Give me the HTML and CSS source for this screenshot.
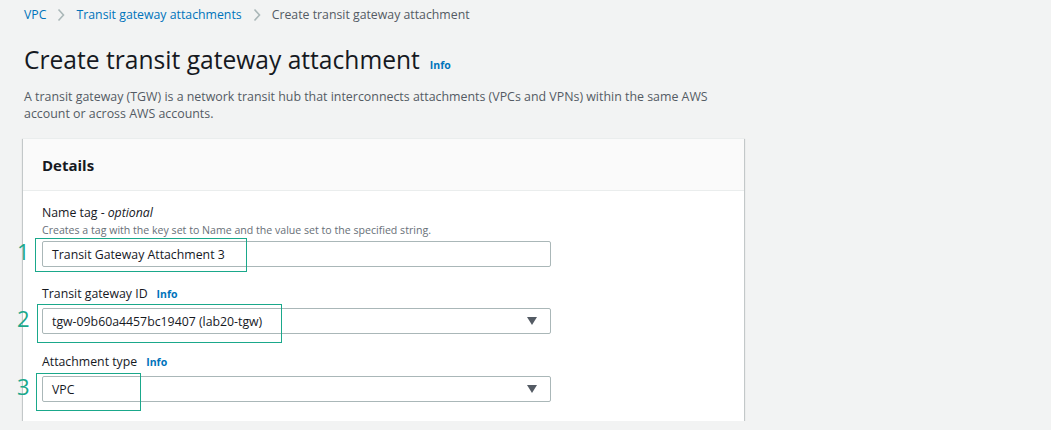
FILE: index.html
```html
<!DOCTYPE html>
<html lang="en">
<head>
<meta charset="utf-8">
<title>Create transit gateway attachment</title>
<link rel="stylesheet" href="styles.css">
</head>
<body>
<main class="page">
  <nav class="breadcrumb">
    <a class="crumb-link" href="#">VPC</a>
    <svg class="crumb-sep" viewBox="0 0 8 14" width="8" height="14"><path d="M1.5 1.5 L6.5 7 L1.5 12.5" fill="none" stroke="#aab7b8" stroke-width="1.6"/></svg>
    <a class="crumb-link" href="#">Transit gateway attachments</a>
    <svg class="crumb-sep" viewBox="0 0 8 14" width="8" height="14"><path d="M1.5 1.5 L6.5 7 L1.5 12.5" fill="none" stroke="#aab7b8" stroke-width="1.6"/></svg>
    <span class="crumb-current">Create transit gateway attachment</span>
  </nav>

  <header class="page-header">
    <h1 class="title">Create transit gateway attachment</h1>
    <a class="info" href="#">Info</a>
  </header>
  <p class="desc">A transit gateway (TGW) is a network transit hub that interconnects attachments (VPCs and VPNs) within the same AWS account or across AWS accounts.</p>

  <section class="card">
    <div class="card-header">
      <h2 class="card-title">Details</h2>
    </div>
    <div class="card-body">
      <div class="field">
        <div class="label">Name tag - <i>optional</i></div>
        <div class="hint">Creates a tag with the key set to Name and the value set to the specified string.</div>
        <div class="control">
          <div class="input">Transit Gateway Attachment 3</div>
          <span class="step-num">1</span>
          <span class="step-box box-1"></span>
        </div>
      </div>

      <div class="field">
        <div class="label">Transit gateway ID <a class="info" href="#">Info</a></div>
        <div class="control">
          <div class="input select">tgw-09b60a4457bc19407 (lab20-tgw)<svg class="caret" viewBox="0 0 10 8" width="10" height="8"><path d="M0 0 H10 L5 8 Z" fill="#545b64"/></svg></div>
          <span class="step-num">2</span>
          <span class="step-box box-2"></span>
        </div>
      </div>

      <div class="field field-last">
        <div class="label">Attachment type <a class="info" href="#">Info</a></div>
        <div class="control">
          <div class="input select">VPC<svg class="caret" viewBox="0 0 10 8" width="10" height="8"><path d="M0 0 H10 L5 8 Z" fill="#545b64"/></svg></div>
          <span class="step-num">3</span>
          <span class="step-box box-3"></span>
        </div>
      </div>
    </div>
  </section>
</main>
</body>
</html>
```

FILE: styles.css
```css
* { box-sizing: border-box; }

html, body {
  margin: 0;
  padding: 0;
  background: #f2f3f3;
}

body {
  font-family: "Open Sans", "Noto Sans", "Liberation Sans", sans-serif;
  color: #16191f;
  font-size: 12.3px;
}

a { text-decoration: none; }

.page {
  padding: 5px 0 0 24px;
}

.breadcrumb {
  display: flex;
  align-items: center;
  gap: 11px;
  height: 20px;
  line-height: 20px;
  font-size: 12.3px;
}

.crumb-link { color: #0073bb; }
.crumb-current { color: #545b64; }
.crumb-sep { display: block; }

.page-header {
  display: flex;
  align-items: baseline;
  gap: 10px;
  margin-top: 19px;
}

.title {
  margin: 0;
  font-size: 24.6px;
  font-weight: 400;
  line-height: 32px;
  color: #16191f;
}

.info {
  color: #0073bb;
  font-weight: 700;
  font-size: 10.5px;
}

.desc {
  margin: 12px 0 0 0;
  max-width: 722px;
  color: #545b64;
  font-size: 12.4px;
  line-height: 17px;
}

.card {
  margin: 16px 0 0 -1px;
  width: 721px;
  background: #fff;
  border-top: 1px solid #eaeded;
  box-shadow: 0 1px 1px 0 rgba(0, 28, 36, 0.3), 1px 1px 1px 0 rgba(0, 28, 36, 0.15), -1px 1px 1px 0 rgba(0, 28, 36, 0.15);
}

.card-header {
  height: 52px;
  background: #fafafa;
  border-bottom: 1px solid #eaeded;
  display: flex;
  align-items: center;
  padding-left: 19px;
}

.card-title {
  margin: 0;
  font-size: 15px;
  font-weight: 700;
  color: #16191f;
}

.card-body {
  padding: 13px 0 19px 19px;
  display: flex;
  flex-direction: column;
  gap: 18px;
}

.field-last { margin-top: 1px; }

.label {
  font-size: 12.3px;
  line-height: 18px;
  color: #16191f;
  display: flex;
  align-items: baseline;
  gap: 9px;
}

.label i { font-style: italic; margin-left: -6px; }

.hint {
  font-size: 10.6px;
  line-height: 16px;
  color: #687078;
}

.control {
  position: relative;
  margin-top: 5px;
  width: 509px;
}

.field:first-child .control { margin-top: 3px; }

.input {
  height: 26px;
  border: 1px solid #aab7b8;
  border-radius: 2px;
  background: #fff;
  padding: 0 9px;
  display: flex;
  align-items: center;
  justify-content: space-between;
  font-size: 12.3px;
  color: #16191f;
}

.caret { display: block; margin-right: 4px; }

.step-num {
  position: absolute;
  left: -25px;
  top: -1px;
  font-size: 22px;
  line-height: 22px;
  color: #1aa88b;
  font-weight: 400;
}

.step-box {
  position: absolute;
  border: 1px solid #1aa88b;
}

.box-1 { left: -7px; top: -3px; width: 212px; height: 34px; }
.box-2 { left: -5px; top: -4px; width: 245px; height: 39px; }
.box-3 { left: -6px; top: -3px; width: 105px; height: 38px; }
```
